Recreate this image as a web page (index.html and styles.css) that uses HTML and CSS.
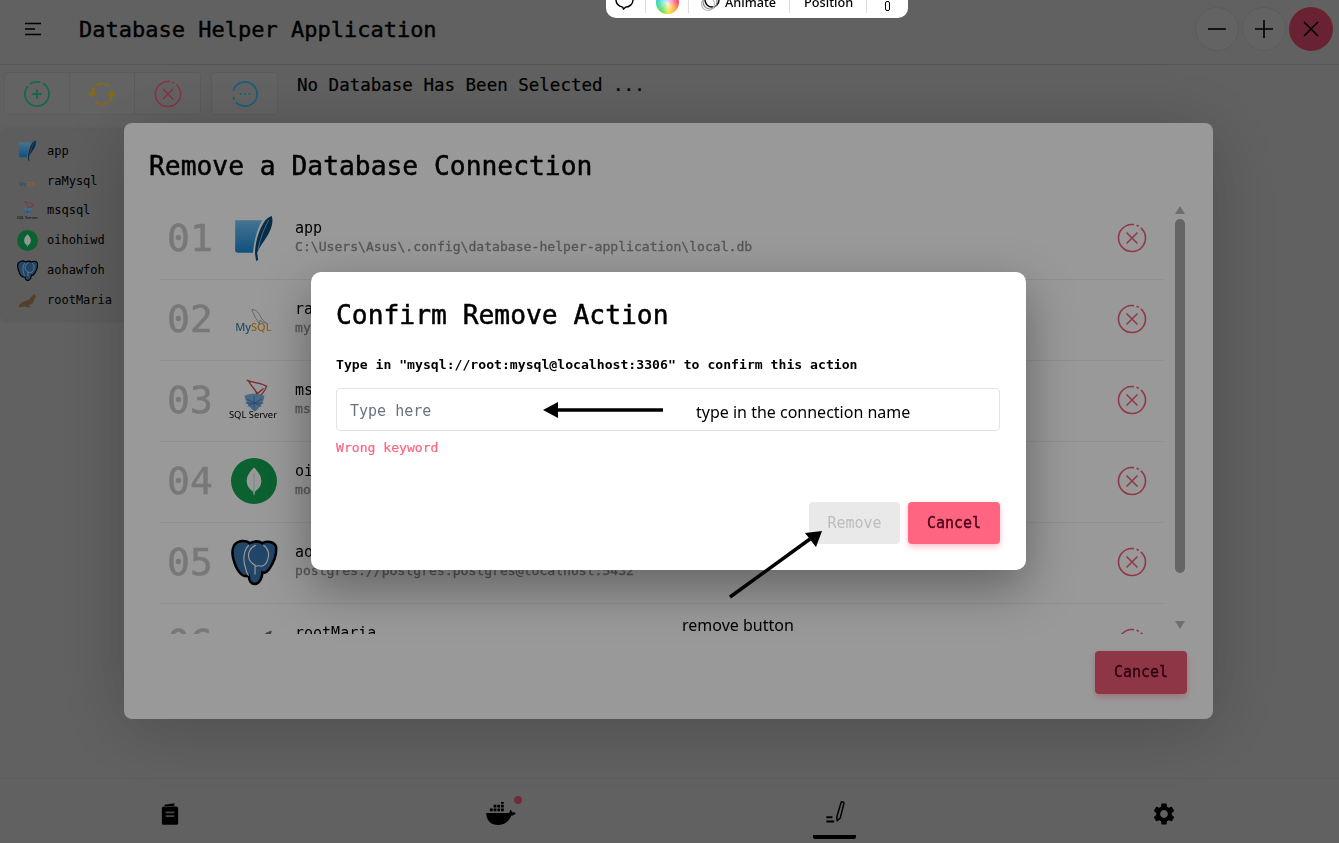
FILE: index.html
```html
<!DOCTYPE html>
<html lang="en">
<head>
    <meta charset="UTF-8">
    <meta name="viewport" content="width=device-width, initial-scale=1.0">
    <title>Database Helper Application</title>
    <link rel="stylesheet" href="styles.css">
</head>
<body>
    <!-- shared logos -->
    <svg class="defs" aria-hidden="true">
        <defs>
            <linearGradient id="sqliteBlue" x1="0" y1="0" x2="0" y2="1">
                <stop offset="0" stop-color="#74c2f2"/>
                <stop offset="1" stop-color="#1c86d6"/>
            </linearGradient>
        </defs>
        <symbol id="logo-sqlite" viewBox="0 0 44 44">
            <path d="M4 5h26c-5 8-8 20-9 31H6a2 2 0 0 1-2-2z" fill="url(#sqliteBlue)"/>
            <path d="M39 1c2 6-1 14-5 20-3 5-7 10-9 15l1 7-2 1-1-7c0-9 3-21 8-29 2-4 5-6 8-7z" fill="#0d4a78"/>
            <path d="M36 5c-4 7-8 17-10 28" fill="none" stroke="#9fd0f0" stroke-width=".7"/>
        </symbol>
        <symbol id="logo-mysql" viewBox="0 0 44 44">
            <path d="M20 13c3 0 6 2 8 6 1 3 3 5 6 7-3-1-5-1-6-3l-1 4c-1-3-3-5-4-7-1-3-3-5-3-7z" fill="none" stroke="#8fa1ad" stroke-width=".8"/>
            <text x="4" y="33.500" class="logo-word"><tspan fill="#3f80a8">My</tspan><tspan fill="#f0a030">SQL</tspan></text>
        </symbol>
        <symbol id="logo-mssql" viewBox="0 0 44 44">
            <path d="M15 3c6 3 13 2 19 6-2 6-5 9-11 12M17 4c2 5 8 9 10 16M31 11c-5 5-11 8-17 9" fill="none" stroke="#d04048" stroke-width="1.300"/>
            <path d="M13 18c6-3 14-2 19 0-1 7-5 12-9 15-5-3-9-8-10-15z" fill="#7fb0e0"/>
            <path d="M15 21l14 7M30 21l-14 7M22 18v14M14 25h17" stroke="#3f78b8" stroke-width=".8"/>
            <text x="-2" y="39.500" class="logo-server">SQL Server</text>
        </symbol>
        <symbol id="logo-mongo" viewBox="0 0 44 44">
            <circle cx="22" cy="22" r="22" fill="#13a24f"/>
            <path d="M22 9c4 4 7 8 7 13s-3 8-6 10l-1 4-1-4c-3-2-6-5-6-10s3-9 7-13z" fill="#fff"/>
            <path d="M22 14v21" stroke="#bfe8cf" stroke-width="1"/>
        </symbol>
        <symbol id="logo-postgres" viewBox="0 0 44 44">
            <path d="M23 43c-4 0-6-3-6-8-5 2-9-2-12-8C2 20 0 11 3 6c4-5 11-5 15-2 4-2 9-2 12 0 4-2 11-2 13 3 1 7-2 15-6 21-2 3-4 5-7 4 0 5-3 11-7 11z" fill="#3a75ad" stroke="#000" stroke-width="2.400"/>
            <path d="M17 6c-5 5-6 14-3 22 1 4 2 6 3 7M31 6c5 3 6 9 4 14-1 4-4 6-6 6M24 6c-5 1-8 7-7 12 1 4 4 6 6 7v9M29 26c-2-1-4 0-6 0" fill="none" stroke="#fff" stroke-width="1.100"/>
        </symbol>
        <symbol id="logo-maria" viewBox="0 0 44 44">
            <path d="M3 38c2-8 9-12 17-14 7-1 9-8 14-12l5-2-1 5 3 1c-4 2-4 7-7 11-2 5-6 6-10 6 2 2 3 3 6 5H19c-2-2-4-1-7-1-3 1-6 1-9 1z" fill="#8a6b4a"/>
        </symbol>
        <symbol id="icon-remove" viewBox="0 0 30 30">
            <circle cx="15" cy="15" r="13.500" fill="none" stroke="currentColor" stroke-width="1.600" pathLength="100" stroke-dasharray="3 3 3 3 88" transform="rotate(-92 15 15)"/>
            <path d="M9.500 9.500l11 11M20.500 9.500l-11 11" fill="none" stroke="currentColor" stroke-width="1.500"/>
        </symbol>
    </svg>

    <div class="app">
        <header class="topbar">
            <svg class="menu-icon" viewBox="0 0 18 14"><path d="M1 1.500h16M1 7h10M1 12.500h16" fill="none" stroke="#000" stroke-width="1.600"/></svg>
            <h1 class="app-title">Database Helper Application</h1>
            <div class="window-buttons">
                <button class="win-btn"><svg viewBox="0 0 24 24"><path d="M3 12h18" stroke="#000" stroke-width="1.600"/></svg></button>
                <button class="win-btn"><svg viewBox="0 0 24 24"><path d="M3 12h18M12 3v18" stroke="#000" stroke-width="1.600"/></svg></button>
                <button class="win-btn win-close"><svg viewBox="0 0 24 24"><path d="M5 5l14 14M19 5L5 19" stroke="#000" stroke-width="1.600"/></svg></button>
            </div>
        </header>

        <div class="toolbar">
            <div class="tool-group">
                <button class="tool-btn">
                    <svg class="tool-icon" viewBox="0 0 30 30"><circle cx="15" cy="15" r="13" fill="none" stroke="#1fb07e" stroke-width="1.900" pathLength="100" stroke-dasharray="78 4 14 4" transform="rotate(-60 15 15)"/><path d="M15 10v10M10 15h10" stroke="#1fb07e" stroke-width="2"/></svg>
                </button>
                <button class="tool-btn">
                    <svg class="tool-icon" viewBox="0 0 30 30"><path d="M4.500 14A10.500 10.500 0 0 1 22 6.500M25.500 16A10.500 10.500 0 0 1 8 23.500" fill="none" stroke="#e4b01a" stroke-width="2.200" stroke-dasharray="7 2.500"/><path d="M0 13h9l-4.500 6zM30 17h-9l4.500-6z" fill="#e4b01a"/></svg>
                </button>
                <button class="tool-btn">
                    <svg class="tool-icon tool-red" viewBox="0 0 30 30"><use href="#icon-remove"/></svg>
                </button>
            </div>
            <div class="tool-group">
                <button class="tool-btn">
                    <svg class="tool-icon" viewBox="0 0 30 30"><circle cx="15" cy="15" r="13" fill="none" stroke="#28a0d2" stroke-width="1.900" pathLength="100" stroke-dasharray="84 4 4 8" transform="rotate(-165 15 15)"/><circle cx="10.500" cy="15" r="1.200" fill="#28a0d2"/><circle cx="15" cy="15" r="1.200" fill="#28a0d2"/><circle cx="19.500" cy="15" r="1.200" fill="#28a0d2"/></svg>
                </button>
            </div>
            <p class="db-status">No Database Has Been Selected ...</p>
        </div>

        <div class="workspace">
            <aside class="sidebar">
                <div class="side-row"><svg class="side-logo"><use href="#logo-sqlite"/></svg><span>app</span></div>
                <div class="side-row"><svg class="side-logo"><use href="#logo-mysql"/></svg><span>raMysql</span></div>
                <div class="side-row"><svg class="side-logo"><use href="#logo-mssql"/></svg><span>msqsql</span></div>
                <div class="side-row"><svg class="side-logo"><use href="#logo-mongo"/></svg><span>oihohiwd</span></div>
                <div class="side-row"><svg class="side-logo"><use href="#logo-postgres"/></svg><span>aohawfoh</span></div>
                <div class="side-row"><svg class="side-logo"><use href="#logo-maria"/></svg><span>rootMaria</span></div>
            </aside>
        </div>

        <nav class="bottom-nav">
            <a class="nav-item">
                <svg viewBox="0 0 24 24"><path d="M7 3.500 16 2v2.500H7zM6 5h12a1.500 1.500 0 0 1 1.500 1.500v14A1.500 1.500 0 0 1 18 22H6a1.500 1.500 0 0 1-1.500-1.500v-14A1.500 1.500 0 0 1 6 5z" fill="#000"/><path d="M8 10.500h8M8 14h8" stroke="#777" stroke-width="1.500"/></svg>
            </a>
            <a class="nav-item">
                <svg class="docker-icon" viewBox="0 0 34 26"><path d="M1 12h24c1 0 2-2 2-4 1 1 2 2 2 3 1 0 3 0 4 1-1 2-3 3-5 3-2 6-8 10-14 10-8 0-13-5-13-13z" fill="#000"/><path d="M5 10V7h3v3zM9 10V7h3v3zM13 10V7h3v3zM17 10V7h3v3zM9 6V3h3v3zM13 6V3h3v3zM17 6V3h3v3zM17 2V0h3v2z" fill="#000"/></svg>
                <span class="nav-badge"></span>
            </a>
            <a class="nav-item nav-active">
                <svg viewBox="0 0 30 30"><path d="M17 21 22 4c.4-1.400 3.600-.6 3.300 1l-4.300 17-3.500 3z" fill="none" stroke="#000" stroke-width="1.700"/><path d="M5 21h7M5 26h9" stroke="#000" stroke-width="2.200"/></svg>
            </a>
            <a class="nav-item">
                <svg viewBox="0 0 24 24"><path d="M19.14 12.94c.04-.3.06-.61.06-.94 0-.32-.02-.64-.07-.94l2.03-1.58c.18-.14.23-.41.12-.61l-1.92-3.32c-.12-.22-.37-.29-.59-.22l-2.39.96c-.5-.38-1.03-.7-1.62-.94l-.36-2.54c-.04-.24-.24-.41-.48-.41h-3.84c-.24 0-.43.17-.47.41l-.36 2.54c-.59.24-1.13.57-1.62.94l-2.39-.96c-.22-.08-.47 0-.59.22L2.74 8.87c-.12.21-.08.47.12.61l2.03 1.58c-.05.3-.09.63-.09.94s.02.64.07.94l-2.03 1.58c-.18.14-.23.41-.12.61l1.92 3.32c.12.22.37.29.59.22l2.39-.96c.5.38 1.03.7 1.62.94l.36 2.54c.05.24.24.41.48.41h3.84c.24 0 .44-.17.47-.41l.36-2.54c.59-.24 1.13-.56 1.62-.94l2.39.96c.22.08.47 0 .59-.22l1.92-3.32c.12-.22.07-.47-.12-.61l-2.01-1.58zM12 15.600c-1.980 0-3.600-1.620-3.600-3.600s1.620-3.600 3.600-3.600 3.600 1.620 3.600 3.600-1.620 3.600-3.600 3.600z" fill="#000"/></svg>
            </a>
        </nav>
    </div>

    <!-- first dialog -->
    <div class="overlay">
        <section class="dialog dialog-list">
            <h2 class="dialog-title">Remove a Database Connection</h2>
            <div class="list-wrap">
                <div class="conn-list">
                    <div class="conn-row">
                        <span class="conn-num">01</span>
                        <svg class="conn-logo"><use href="#logo-sqlite"/></svg>
                        <div class="conn-text"><div class="conn-name">app</div><div class="conn-path">C:\Users\Asus\.config\database-helper-application\local.db</div></div>
                        <svg class="conn-remove"><use href="#icon-remove"/></svg>
                    </div>
                    <div class="conn-row">
                        <span class="conn-num">02</span>
                        <svg class="conn-logo"><use href="#logo-mysql"/></svg>
                        <div class="conn-text"><div class="conn-name">raMysql</div><div class="conn-path">mysql://root:mysql@localhost:3306</div></div>
                        <svg class="conn-remove"><use href="#icon-remove"/></svg>
                    </div>
                    <div class="conn-row">
                        <span class="conn-num">03</span>
                        <svg class="conn-logo"><use href="#logo-mssql"/></svg>
                        <div class="conn-text"><div class="conn-name">msqsql</div><div class="conn-path">mssql://sa:mssql@localhost:1433</div></div>
                        <svg class="conn-remove"><use href="#icon-remove"/></svg>
                    </div>
                    <div class="conn-row">
                        <span class="conn-num">04</span>
                        <svg class="conn-logo"><use href="#logo-mongo"/></svg>
                        <div class="conn-text"><div class="conn-name">oihohiwd</div><div class="conn-path">mongodb://localhost:27017</div></div>
                        <svg class="conn-remove"><use href="#icon-remove"/></svg>
                    </div>
                    <div class="conn-row">
                        <span class="conn-num">05</span>
                        <svg class="conn-logo"><use href="#logo-postgres"/></svg>
                        <div class="conn-text"><div class="conn-name">aohawfoh</div><div class="conn-path">postgres://postgres:postgres@localhost:5432</div></div>
                        <svg class="conn-remove"><use href="#icon-remove"/></svg>
                    </div>
                    <div class="conn-row">
                        <span class="conn-num">06</span>
                        <svg class="conn-logo"><use href="#logo-maria"/></svg>
                        <div class="conn-text"><div class="conn-name">rootMaria</div><div class="conn-path">mariadb://root:maria@localhost:3307</div></div>
                        <svg class="conn-remove"><use href="#icon-remove"/></svg>
                    </div>
                </div>
                <div class="scrollbar">
                    <span class="scroll-up"></span>
                    <span class="scroll-thumb"></span>
                    <span class="scroll-down"></span>
                </div>
            </div>
            <div class="dialog-actions">
                <button class="btn btn-cancel">Cancel</button>
            </div>
        </section>
    </div>

    <!-- confirm dialog -->
    <div class="overlay overlay-dim">
        <section class="dialog dialog-confirm">
            <h2 class="dialog-title">Confirm Remove Action</h2>
            <p class="confirm-hint">Type in "mysql://root:mysql@localhost:3306" to confirm this action</p>
            <input class="confirm-input" type="text" placeholder="Type here">
            <p class="confirm-error">Wrong keyword</p>
            <div class="dialog-actions">
                <button class="btn btn-disabled">Remove</button>
                <button class="btn btn-cancel">Cancel</button>
            </div>
        </section>
    </div>

    <!-- tutorial notes drawn on top of the screenshot -->
    <svg class="note-arrows" viewBox="0 0 1339 843">
        <path d="M663 410H556" stroke="#000" stroke-width="3.500"/>
        <path d="M543 410l15-8v16z" fill="#000"/>
        <path d="M730 597l80-58" stroke="#000" stroke-width="3.500"/>
        <path d="M822 531l-6 16-11-14z" fill="#000"/>
    </svg>
    <span class="note note-input">type in the connection name</span>
    <span class="note note-remove">remove button</span>

    <div class="float-bar">
        <svg class="float-bubble" viewBox="0 0 20 20"><path d="M10 1c5 0 9 3 9 8s-4 8-8 8l-2 2-1-2c-4-1-7-4-7-8s4-8 9-8z" fill="#fff" stroke="#000" stroke-width="1.500"/></svg>
        <i class="float-sep"></i>
        <span class="float-wheel"></span>
        <i class="float-sep"></i>
        <svg class="float-swirl" viewBox="0 0 20 20"><circle cx="11" cy="8" r="7" fill="none" stroke="#000" stroke-width="1.400"/><circle cx="9" cy="10" r="7" fill="none" stroke="#888" stroke-width="1.200"/><circle cx="7" cy="12" r="6.500" fill="none" stroke="#bbb" stroke-width="1.200"/></svg>
        <span class="float-label">Animate</span>
        <i class="float-sep"></i>
        <span class="float-label">Position</span>
        <i class="float-sep"></i>
        <span class="float-pin"></span>
    </div>
</body>
</html>
```

FILE: styles.css
```css
* {
    box-sizing: border-box;
}

html, body {
    margin: 0;
    padding: 0;
    height: 100%;
    overflow: hidden;
}

body {
    font-family: "DejaVu Sans Mono", "Liberation Mono", monospace;
    background: #a2a2a2;
    color: #000;
}

button {
    font-family: inherit;
    border: none;
    background: none;
    padding: 0;
}

symbol {
    overflow: visible;
}

.defs {
    width: 0;
    height: 0;
    display: block;
    overflow: hidden;
}

.logo-word {
    font-family: "Noto Sans", sans-serif;
    font-size: 10.500px;
    font-weight: 500;
}

.logo-server {
    font-family: "Noto Sans", sans-serif;
    font-size: 9px;
    fill: #000;
}

.app {
    height: 100vh;
    display: flex;
    flex-direction: column;
}

/* top bar */
.topbar {
    height: 65px;
    flex: none;
    display: flex;
    align-items: center;
    padding: 0 6px 6px 24px;
    border-bottom: 1px solid #909090;
}

.menu-icon {
    width: 18px;
    height: 14px;
}

.app-title {
    font-size: 22px;
    font-weight: 400;
    -webkit-text-stroke: 0.4px #000;
    margin: 0 0 0 37px;
    flex: 1;
}

.window-buttons {
    display: flex;
    gap: 3px;
}

.win-btn {
    width: 44px;
    height: 44px;
    border-radius: 50%;
    border: 1px solid #999;
    background: #a6a6a6;
    display: flex;
    align-items: center;
    justify-content: center;
}

.win-btn svg {
    width: 24px;
    height: 24px;
}

.win-close {
    background: #b03a54;
    border: none;
}

/* toolbar */
.toolbar {
    flex: none;
    display: flex;
    gap: 10px;
    padding: 7px 0 0 4px;
}

.tool-group {
    display: flex;
    height: 43px;
    border: 1px solid #999;
    border-radius: 4px;
    background: #a6a6a6;
}

.tool-btn {
    width: 65px;
    display: flex;
    align-items: center;
    justify-content: center;
    border-right: 1px solid #999;
}

.tool-btn:last-child {
    border-right: none;
}

.tool-icon {
    width: 28px;
    height: 28px;
}

.tool-red {
    color: #e8506c;
}

.db-status {
    margin: 3px 0 0 9px;
    font-size: 17.500px;
    line-height: 20px;
    -webkit-text-stroke: 0.2px #000;
}

/* sidebar */
.workspace {
    flex: 1;
    padding: 15px 0 0 2px;
}

.sidebar {
    width: 140px;
    padding: 6px 0 5px;
    background: #9c9c9c;
    border-radius: 4px;
    box-shadow: 0 0 4px rgba(0, 0, 0, 0.15);
}

.side-row {
    height: 29.800px;
    display: flex;
    align-items: center;
    gap: 9px;
    padding-left: 15px;
    font-size: 12px;
}

.side-logo {
    width: 21px;
    height: 21px;
}

/* bottom nav */
.bottom-nav {
    height: 65px;
    flex: none;
    display: flex;
    justify-content: space-between;
    align-items: flex-start;
    padding: 0 154px 0 149px;
    border-top: 1px solid #999;
}

.nav-item {
    position: relative;
    width: 42px;
    height: 60px;
    padding-top: 10px;
    display: flex;
    justify-content: center;
    align-items: center;
}

.nav-item svg {
    width: 26px;
    height: 26px;
}

.nav-item .docker-icon {
    width: 32px;
    height: 24px;
}

.nav-badge {
    position: absolute;
    top: 17px;
    right: 0;
    width: 8px;
    height: 8px;
    border-radius: 50%;
    background: #b84a62;
}

.nav-active {
    width: 43px;
    margin: 0 -2px 0 2px;
    border-bottom: 4px solid #000;
    border-radius: 2px;
}

/* dialogs */
.overlay {
    position: fixed;
    inset: 0;
    padding: 0 2px 2px 0;
    display: flex;
    align-items: center;
    justify-content: center;
}

.overlay-dim {
    background: rgba(0, 0, 0, 0.4);
}

.dialog {
    background: #fff;
    display: flex;
    flex-direction: column;
}

.dialog-title {
    font-size: 26.300px;
    font-weight: 400;
    -webkit-text-stroke: 0.5px #000;
    line-height: 34px;
    margin: 0;
}

.dialog-list {
    width: 1089px;
    height: 596px;
    padding: 26px 26px 25px 25px;
    border-radius: 8px;
    box-shadow: 0 8px 70px rgba(0, 0, 0, 0.22);
}

.dialog-confirm {
    width: 715px;
    height: 298px;
    padding: 26px 26px 26px 25px;
    border-radius: 10px;
    box-shadow: 0 18px 50px rgba(0, 0, 0, 0.35);
}

.dialog-confirm .btn {
    height: 42px;
}

.dialog-list .btn-cancel {
    background: #ee5a75;
}

.dialog-actions {
    margin-top: auto;
    display: flex;
    justify-content: flex-end;
    gap: 8px;
}

.btn {
    width: 92px;
    height: 43px;
    border-radius: 4px;
    font-size: 15px;
}

.btn-cancel {
    background: #ff6480;
    color: #4a0416;
    -webkit-text-stroke: 0.35px #4a0416;
    box-shadow: 0 3px 6px rgba(255, 100, 128, 0.4);
}

.btn-disabled {
    width: 91px;
    background: #e9e9e9;
    color: #bcbcbc;
}

/* connection list */
.list-wrap {
    display: flex;
    gap: 9px;
    height: 435px;
    margin: 16px 0 0 10px;
}

.conn-list {
    flex: 1;
    overflow: hidden;
}

.conn-row {
    height: 81px;
    display: flex;
    align-items: center;
    padding: 0 17px 2px 8px;
    border-bottom: 1px solid #f0f0f0;
}

.conn-num {
    font-size: 38px;
    color: #c8c8c8;
    -webkit-text-stroke: 0.5px #c8c8c8;
    width: 46px;
}

.conn-logo {
    width: 46px;
    height: 46px;
    margin-left: 18px;
    overflow: visible;
}

.conn-text {
    flex: 1;
    margin-left: 18px;
    padding-bottom: 2px;
}

.conn-name {
    font-size: 15px;
    line-height: 20px;
}

.conn-path {
    font-size: 13.100px;
    line-height: 17px;
    color: #8f8f8f;
    -webkit-text-stroke: 0.3px #8f8f8f;
}

.conn-remove {
    width: 30px;
    height: 30px;
    color: #f25c78;
}

.scrollbar {
    width: 14px;
    display: flex;
    flex-direction: column;
    align-items: center;
    padding-top: 7px;
}

.scroll-up, .scroll-down {
    width: 0;
    height: 0;
    border-left: 5px solid transparent;
    border-right: 5px solid transparent;
}

.scroll-up {
    border-bottom: 8px solid #b8b8b8;
}

.scroll-down {
    margin-top: 48px;
    border-top: 8px solid #b8b8b8;
}

.scroll-thumb {
    width: 10px;
    height: 354px;
    margin-top: 5px;
    border-radius: 5px;
    background: #a8a8a8;
}

/* confirm dialog */
.confirm-hint {
    margin: 24px 0 0;
    font-size: 13.130px;
    line-height: 18px;
    font-weight: 700;
}

.confirm-input {
    width: 100%;
    height: 43px;
    margin-top: 14px;
    padding: 3px 13px 0;
    border: 1.500px solid #e2e2e2;
    border-radius: 4px;
    font-family: inherit;
    font-size: 15px;
    outline: none;
}

.confirm-input::placeholder {
    color: #6b7280;
}

.confirm-error {
    margin: 8px 0 0;
    font-size: 13.100px;
    line-height: 18px;
    color: #ff6480;
    -webkit-text-stroke: 0.2px #ff6480;
}

/* tutorial notes */
.note-arrows {
    position: fixed;
    inset: 0;
    width: 100%;
    height: 100%;
    pointer-events: none;
}

.note {
    position: fixed;
    font-family: "Noto Sans", sans-serif;
    font-size: 16px;
    line-height: 20px;
    color: #000;
}

.note-input {
    left: 696px;
    top: 402px;
}

.note-remove {
    left: 682px;
    top: 615px;
}

/* floating editor bar cut by the top edge */
.float-bar {
    position: fixed;
    left: 606px;
    top: -14px;
    width: 302px;
    height: 32px;
    padding-left: 9px;
    background: #fff;
    border-radius: 10px;
    display: flex;
    align-items: center;
    font-family: "Noto Sans", sans-serif;
    font-size: 12.700px;
    font-weight: 500;
    color: #000;
}

.float-bubble {
    width: 19px;
    height: 19px;
    margin: -3px 11px 0 0;
}

.float-sep {
    width: 1px;
    height: 22px;
    background: #ddd;
}

.float-wheel {
    width: 23px;
    height: 23px;
    margin: 0 9px 0 10px;
    border-radius: 50%;
    background:
        radial-gradient(circle, rgba(255, 255, 255, 0.85), rgba(255, 255, 255, 0) 65%),
        conic-gradient(#4a7cff, #e04ae0 45deg, #ff4a5a 90deg, #ffb03c 135deg, #f4e04a 175deg, #5ee05a 215deg, #35d6c8 280deg, #4a7cff);
}

.float-swirl {
    width: 20px;
    height: 20px;
    margin-left: 12px;
    margin-right: 4px;
}

.float-label {
    margin: -1px 13px 0 0;
}

.float-label + .float-sep + .float-label {
    margin-left: 14px;
}

.float-pin {
    width: 5px;
    height: 10px;
    margin: 8px 0 0 18px;
    border: 1px solid #000;
    border-radius: 2px;
}
```
